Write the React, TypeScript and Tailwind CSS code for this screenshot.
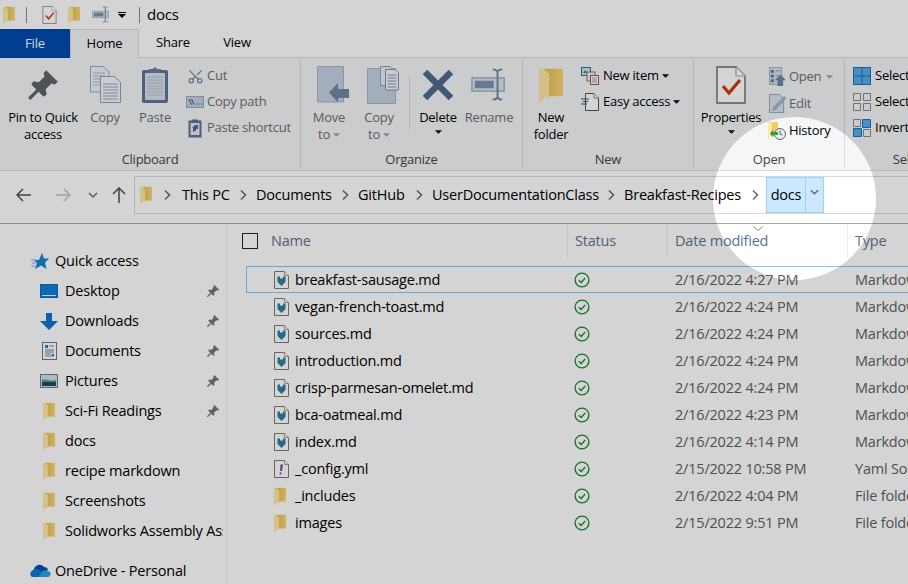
import { Scissors } from "lucide-react";
import type { ReactNode } from "react";

const uiFont = "font-['Open_Sans','Noto_Sans',sans-serif]";

function FolderDefs() {
  return (
    <svg className="absolute w-0 h-0">
      <defs>
        <linearGradient id="folderBody" x1="0" x2="1" y1="0" y2="0">
          <stop offset="0" stopColor="#e6bb52" />
          <stop offset="1" stopColor="#fad877" />
        </linearGradient>
      </defs>
    </svg>
  );
}

function FolderIcon({ className = "w-[12px] h-[18px]" }: { className?: string }) {
  return (
    <svg viewBox="0 0 14 21" className={className}>
      <path d="M3 1H14V17H3Z" fill="url(#folderBody)" />
      <path d="M0 1H2.5L6 4V18H3L1 21L0 20Z" fill="#ffe8a6" />
    </svg>
  );
}

function PinIcon({ className = "w-[15px] h-[15px]", color = "#70777f" }: { className?: string; color?: string }) {
  return (
    <svg viewBox="0 0 32 32" className={className}>
      <path d="M19 2L30 13L27 15.5L24 14.5L18.5 20L19.5 25L16.5 27L5 15.5L7 12.5L12 13.5L17.5 8L16.5 5Z" fill={color} />
      <path d="M11 21L3 29" stroke={color} strokeWidth="3" />
    </svg>
  );
}

function Caret({ color = "#000" }: { color?: string }) {
  return (
    <svg viewBox="0 0 8 4" className="w-[7px] h-[4px]">
      <path d="M0 0H8L4 4Z" fill={color} />
    </svg>
  );
}

function Chevron({ className = "w-[8px] h-[12px]", color = "#6d6d6d" }: { className?: string; color?: string }) {
  return (
    <svg viewBox="0 0 8 12" className={className}>
      <path d="M2 1.5L6.5 6L2 10.5" fill="none" stroke={color} strokeWidth="1.6" />
    </svg>
  );
}

function MdFileIcon() {
  return (
    <svg viewBox="0 0 15 18" className="w-[15px] h-[18px]">
      <path d="M.5.5H10.5L14.5 4.5V17.5H.5Z" fill="#fff" stroke="#7b7b7b" />
      <path d="M10.5.5V4.5H14.5" fill="#fff" stroke="#a0a0a0" />
      <path d="M3.5 5.5H6V7.5H9V5.5H11.5V11L7.5 15L3.5 11Z" fill="#2f7f9f" />
    </svg>
  );
}

function YamlIcon() {
  return (
    <svg viewBox="0 0 15 18" className="w-[15px] h-[18px]">
      <path d="M.5.5H10.5L14.5 4.5V17.5H.5Z" fill="#fff" stroke="#7b7b7b" />
      <path d="M10.5.5V4.5H14.5" fill="#fff" stroke="#a0a0a0" />
      <path d="M6.5 4.5H9L8 11H6.2ZM5.8 12.5H7.6L7.3 14.5H5.5Z" fill="#7a3f9d" />
    </svg>
  );
}

function SyncedIcon() {
  return (
    <svg viewBox="0 0 16 16" className="w-[16px] h-[16px]">
      <circle cx="8" cy="8" r="6.9" fill="none" stroke="#128a2c" strokeWidth="1.3" />
      <path d="M4.8 8.2L7.2 10.5L11.3 5.9" fill="none" stroke="#128a2c" strokeWidth="1.3" />
    </svg>
  );
}

function CheckDoc({ className }: { className: string }) {
  return (
    <svg viewBox="0 0 30 38" className={className}>
      <path d="M1 1H20L29 10V37H1Z" fill="#fff" stroke="#6b6b6b" strokeWidth="1.4" />
      <path d="M20 1V10H29" fill="#fff" stroke="#a8a8a8" strokeWidth="1.2" />
      <path d="M7 20L13 27L24 14" fill="none" stroke="#d13a12" strokeWidth="3.2" />
    </svg>
  );
}

function RenameIcon({ className }: { className: string }) {
  return (
    <svg viewBox="0 0 38 34" className={className}>
      <rect x="1" y="10" width="34" height="14" fill="#dce4ef" stroke="#8ea1bd" strokeWidth="1.2" />
      <rect x="4" y="13" width="20" height="8" fill="#7d92b3" />
      <path d="M23 1C26 1 27 2 28 3C29 2 30 1 33 1M28 3V31M23 33C26 33 27 32 28 31C29 32 30 33 33 33" fill="none" stroke="#6f86a8" strokeWidth="2" />
    </svg>
  );
}

function CopyIcon() {
  return (
    <svg viewBox="0 0 31 37" className="w-[31px] h-[37px]">
      <path d="M.5.5H13L19 6V26H.5Z" fill="#eef2f8" stroke="#99a9c2" />
      <path d="M3 7H15M3 10H15M3 13H15M3 16H15M3 19H15" stroke="#aab8cc" />
      <path d="M10.5 10.5H24L30.5 16V36.5H10.5Z" fill="#f3f6fa" stroke="#8ea0bb" />
      <path d="M13 18H28M13 21H28M13 24H28M13 27H28M13 30H28M13 33H28" stroke="#93a5bf" />
    </svg>
  );
}

function PasteIcon() {
  return (
    <svg viewBox="0 0 28 38" className="w-[28px] h-[38px]">
      <rect x="1" y="4" width="26" height="33" rx="2" fill="#5f7498" />
      <rect x="4" y="7" width="20" height="27" fill="#d9e0eb" />
      <path d="M6 11H22M6 14H22M6 17H22M6 20H22M6 23H22M6 26H22M6 29H22" stroke="#b4c0d2" />
      <path d="M8 3H12C12 1 16 1 16 3H20V7H8Z" fill="#6a7da0" />
    </svg>
  );
}

function MoveToIcon() {
  return (
    <svg viewBox="0 0 32 37" className="w-[32px] h-[37px] ml-[8px]">
      <path d="M.5.5H26.5V36H.5Z" fill="#c6d1e1" stroke="#a5b5cc" />
      <path d="M12 26.5L21 17V23H32V32H21V36.5Z" fill="#6f86a8" />
    </svg>
  );
}

function CopyToIcon() {
  return (
    <svg viewBox="0 0 32 38" className="w-[32px] h-[38px] ml-[8px]">
      <path d="M.5 2.5H28.5V37.5H.5Z" fill="#c6d1e1" stroke="#a5b5cc" />
      <path d="M13.5.5H23L26.5 4V19.5H13.5Z" fill="#e9eef5" stroke="#8ea0bb" />
      <path d="M18.5 3.5H28L31.5 7V24H18.5Z" fill="#f5f7fa" stroke="#7e93b1" />
      <path d="M20.5 9H29.5M20.5 12H29.5M20.5 15H29.5M20.5 18H29.5M20.5 21H29.5" stroke="#7e93b1" />
    </svg>
  );
}

function DeleteIcon() {
  return (
    <svg viewBox="0 0 32 32" className="w-[32px] h-[32px]">
      <path d="M3 3L29 29M29 3L3 29" stroke="#4f6a92" strokeWidth="6.4" />
    </svg>
  );
}

function SmallClipIcon() {
  return (
    <svg viewBox="0 0 14 20" className="w-[14px] h-[20px]">
      <rect x=".5" y="2.5" width="13" height="17" fill="#5f7498" />
      <rect x="2.5" y="5" width="9" height="12" fill="#e3e8f0" />
      <path d="M4 1.5H10V4H4Z" fill="#5f7498" />
      <path d="M5 14V10H4L7 7H10V11H8V12.5Z" fill="#4f6a92" />
    </svg>
  );
}

function CopyPathIcon() {
  return (
    <svg viewBox="0 0 18 12" className="w-[18px] h-[12px]">
      <rect x=".5" y=".5" width="17" height="11" fill="#c6d1e1" stroke="#95a8c4" />
      <path d="M3 3L5.5 8.5M5.5 3L8 8.5" stroke="#3f5375" strokeWidth="1" />
      <path d="M10 8H11M12.5 8H13.5M15 8H16" stroke="#3f5375" />
    </svg>
  );
}

function NewItemIcon() {
  return (
    <svg viewBox="0 0 18 18" className="w-[18px] h-[18px]">
      <rect x=".5" y=".5" width="9" height="8" fill="#cfe3f5" stroke="#35679c" />
      <path d="M2 6L4 3L7 6Z" fill="#4b8c4b" />
      <rect x="6" y="5" width="8" height="9" fill="#f1f1f1" stroke="#7a7a7a" />
      <rect x="9.5" y="8.5" width="8" height="9" fill="#fff" stroke="#b04a4a" />
      <path d="M11 11H16M11 13H16M11 15H16" stroke="#8aa0bf" />
    </svg>
  );
}

function EasyAccessIcon() {
  return (
    <svg viewBox="0 0 18 18" className="w-[18px] h-[18px]">
      <path d="M4.5.5H13L17.5 5V17.5H4.5Z" fill="#fff" stroke="#555" />
      <path d="M13 .5V5H17.5" fill="#fff" stroke="#888" />
      <path d="M0 6H8M2 8.5H7M0 11H6" stroke="#30507a" strokeWidth="1.1" />
    </svg>
  );
}

function OpenIcon() {
  return (
    <svg viewBox="0 0 18 20" className="w-[17px] h-[19px]">
      <rect x=".5" y=".5" width="13" height="18" fill="#d6deea" stroke="#9fb0c8" />
      <path d="M2 3H5V6H2ZM2 8H5V11H2ZM2 13H5V16H2Z" fill="#5f7498" />
      <path d="M7 4H12M7 9H10" stroke="#8ea0bb" />
      <path d="M12 8L18 14H15V20H9V14H6Z" fill="#6f86a8" />
    </svg>
  );
}

function EditIcon() {
  return (
    <svg viewBox="0 0 18 20" className="w-[17px] h-[19px]">
      <path d="M.5.5H11L15.5 5V19.5H.5Z" fill="#dbe3ee" stroke="#91a4bf" />
      <path d="M5 14L16 2.5L18 4.5L7 16L4 17Z" fill="#a9b9cf" stroke="#7e93b1" strokeWidth=".6" />
    </svg>
  );
}

function HistoryIcon() {
  return (
    <svg viewBox="0 0 18 18" className="w-[18px] h-[18px]">
      <path d="M2 0H10V14H2Z" fill="#f0cc68" />
      <path d="M0 0H2L4 2V14H2L1 17L0 16Z" fill="#ffe8a6" />
      <circle cx="12" cy="12" r="5.5" fill="#eee" stroke="#666" />
      <path d="M12 8.5V12L14.5 13" fill="none" stroke="#555" />
      <path d="M2 10H7V7.5L10 11.5L7 15.5V13H2Z" fill="#2f9e44" transform="rotate(180 6 11.5)" />
    </svg>
  );
}

function SelectAllIcon() {
  return (
    <svg viewBox="0 0 18 18" className="w-[18px] h-[18px]">
      <rect x=".5" y=".5" width="17" height="17" fill="#5aaae6" stroke="#1474c4" />
      <path d="M9 0V18M0 9H18" stroke="#1474c4" />
    </svg>
  );
}

function SelectNoneIcon() {
  return (
    <svg viewBox="0 0 18 18" className="w-[18px] h-[18px]">
      <path d="M.5.5H7.5V7.5H.5ZM10.5.5H17.5V7.5H10.5ZM.5 10.5H7.5V17.5H.5ZM10.5 10.5H17.5V17.5H10.5Z" fill="none" stroke="#888" />
    </svg>
  );
}

function InvertIcon() {
  return (
    <svg viewBox="0 0 18 18" className="w-[18px] h-[18px]">
      <path d="M.5.5H7.5V7.5H.5ZM10.5 10.5H17.5V17.5H10.5Z" fill="none" stroke="#888" />
      <path d="M9.5.5H17.5V8.5H9.5ZM.5 9.5H8.5V17.5H.5Z" fill="#5aaae6" stroke="#1474c4" />
    </svg>
  );
}

function DesktopIcon() {
  return (
    <svg viewBox="0 0 18 14" className="w-[18px] h-[14px]">
      <rect x=".5" y=".5" width="17" height="13" fill="#0f7fdc" stroke="#1668ac" />
      <path d="M2 11.5H16" stroke="#dff" strokeWidth="1" />
    </svg>
  );
}

function DownloadsIcon() {
  return (
    <svg viewBox="0 0 18 17" className="w-[18px] h-[17px]">
      <path d="M6 0H12V8H18L9 17L0 8H6Z" fill="#0e74cf" />
    </svg>
  );
}

function DocumentsIcon() {
  return (
    <svg viewBox="0 0 15 18" className="w-[15px] h-[18px]">
      <rect x=".5" y=".5" width="14" height="17" fill="#fff" stroke="#777" />
      <path d="M3 3H6V6H3Z" fill="#2a7fc4" />
      <path d="M7 4H12M3 8H12M3 10H12M3 12H9M3 14H12" stroke="#5a8fb8" />
      <path d="M10 12H12V14H10Z" fill="#3c8a4a" />
    </svg>
  );
}

function PicturesIcon() {
  return (
    <svg viewBox="0 0 18 14" className="w-[18px] h-[14px]">
      <rect x=".5" y=".5" width="17" height="13" fill="#cfe0ef" stroke="#777" />
      <path d="M2 6C6 4 10 8 16 6V8H2Z" fill="#4f9a96" />
      <path d="M2 8H16V12H2Z" fill="#1e4f5a" />
    </svg>
  );
}

function QuickAccessIcon() {
  return (
    <svg viewBox="0 0 18 17" className="w-[18px] h-[17px]">
      <path d="M11 0L13 5.5H18L14 9.5L15.5 16L10 12.5L4 16L6 10L3 7H8Z" fill="#1482d8" />
      <path d="M0 7H5M1 10H5M0 13H4" stroke="#6fb2e6" strokeWidth="1" />
    </svg>
  );
}

function OneDriveIcon() {
  return (
    <svg viewBox="0 0 21 14" className="w-[21px] h-[14px]">
      <path d="M4 5C5 1 11-1 14 3C17 3 18 5 18 6L8 10Z" fill="#0a4fa8" />
      <path d="M3 13C0 13-1 8 3 6C6 4 8 5 9 6L14 8L10 13Z" fill="#0f78d4" />
      <path d="M8 13H18C21 13 22 8 18 7C15 6 13 7 12 8Z" fill="#2aa3e6" />
    </svg>
  );
}

function LargeButton({ width, icon, lines, muted, caret }: { width: string; icon: ReactNode; lines: string[]; muted?: boolean; caret?: string }) {
  return (
    <div className={`${width} flex flex-col items-center shrink-0`}>
      <div className="h-[49px] flex items-center justify-center">{icon}</div>
      {lines.map((line, i) => (
        <div key={line} className={`h-[17px] leading-[17px] flex items-center gap-[3px] whitespace-nowrap ${muted ? "text-[#6f6f6f]" : "text-black"}`}>
          {line}
          {caret && i === lines.length - 1 && lines.length > 1 && <Caret color={caret} />}
        </div>
      ))}
      {caret && lines.length === 1 && (
        <div className="h-[12px] flex items-center">
          <Caret color={caret} />
        </div>
      )}
    </div>
  );
}

function SmallButton({ icon, label, muted, caret, gap = "gap-[5px]", height = "h-[26px]", caretGap = "ml-[2px]" }: { icon: ReactNode; label: string; muted?: boolean; caret?: string; gap?: string; height?: string; caretGap?: string }) {
  return (
    <div className={`${height} flex items-center whitespace-nowrap ${gap} ${muted ? "text-[#6f6f6f]" : "text-black"}`}>
      <span className="w-[18px] flex justify-center shrink-0">{icon}</span>
      <span>{label}</span>
      {caret && (
        <span className={caretGap}>
          <Caret color={caret} />
        </span>
      )}
    </div>
  );
}

function RibbonGroup({ width, label, children, last }: { width: string; label: string; children: ReactNode; last?: boolean }) {
  return (
    <div className={`${width} shrink-0 flex flex-col my-[2px] ${last ? "" : "border-r border-[#dadbdc]"}`}>
      <div className="h-[90px] flex">{children}</div>
      <div className="h-[18px] leading-[18px] text-center text-[#444] whitespace-nowrap">{label}</div>
    </div>
  );
}

function Ribbon() {
  return (
    <div className="h-[113px] flex bg-[#f5f6f7] border-b border-[#dadbdc] text-[13px] tracking-[-0.25px] overflow-hidden">
      <RibbonGroup width="w-[301px]" label="Clipboard">
        <LargeButton width="w-[86px]" icon={<PinIcon className="w-[34px] h-[34px]" color="#5d646c" />} lines={["Pin to Quick", "access"]} />
        <LargeButton width="w-[38px]" icon={<CopyIcon />} lines={["Copy"]} muted />
        <LargeButton width="w-[62px]" icon={<PasteIcon />} lines={["Paste"]} muted />
        <div className="pt-[3px]">
          <SmallButton icon={<Scissors className="w-[17px] h-[17px] -rotate-90 text-[#7487a5]" strokeWidth={1.8} />} label="Cut" muted gap="gap-[3px]" />
          <SmallButton icon={<CopyPathIcon />} label="Copy path" muted gap="gap-[3px]" />
          <SmallButton icon={<SmallClipIcon />} label="Paste shortcut" muted gap="gap-[3px]" />
        </div>
      </RibbonGroup>
      <RibbonGroup width="w-[222px]" label="Organize">
        <LargeButton width="w-[56px]" icon={<MoveToIcon />} lines={["Move", "to"]} muted caret="#a0a0a0" />
        <LargeButton width="w-[44px]" icon={<CopyToIcon />} lines={["Copy", "to"]} muted caret="#a0a0a0" />
        <div className="w-px h-[55px] bg-[#dadbdc] mt-[15px] ml-[8px] shrink-0" />
        <LargeButton width="w-[56px]" icon={<DeleteIcon />} lines={["Delete"]} caret="#000" />
        <LargeButton width="w-[46px]" icon={<RenameIcon className="w-[36px] h-[33px]" />} lines={["Rename"]} muted />
      </RibbonGroup>
      <RibbonGroup width="w-[171px]" label="New">
        <LargeButton width="w-[56px]" icon={<FolderIcon className="w-[24px] h-[36px]" />} lines={["New", "folder"]} />
        <div className="pt-[3px] pl-[2px]">
          <SmallButton icon={<NewItemIcon />} label="New item" caret="#000" gap="gap-[4px]" caretGap="-ml-[1px]" />
          <SmallButton icon={<EasyAccessIcon />} label="Easy access" caret="#000" gap="gap-[4px]" caretGap="-ml-[1px]" />
        </div>
      </RibbonGroup>
      <RibbonGroup width="w-[151px]" label="Open">
        <LargeButton width="w-[74px]" icon={<CheckDoc className="w-[30px] h-[38px]" />} lines={["Properties"]} caret="#000" />
        <div className="pt-[3px]">
          <SmallButton icon={<OpenIcon />} label="Open" muted caret="#a0a0a0" gap="gap-[3px]" height="h-[27px]" />
          <SmallButton icon={<EditIcon />} label="Edit" muted gap="gap-[3px]" height="h-[27px]" />
          <SmallButton icon={<HistoryIcon />} label="History" gap="gap-[3px]" height="h-[27px]" />
        </div>
      </RibbonGroup>
      <RibbonGroup width="w-[130px]" label="Select" last>
        <div className="pt-[3px] pl-[8px]">
          <SmallButton icon={<SelectAllIcon />} label="Select all" gap="gap-[4px]" />
          <SmallButton icon={<SelectNoneIcon />} label="Select none" gap="gap-[4px]" />
          <SmallButton icon={<InvertIcon />} label="Invert selection" gap="gap-[4px]" />
        </div>
      </RibbonGroup>
    </div>
  );
}

function Crumb({ label, width, gapWidth }: { label: string; width: string; gapWidth: string }) {
  return (
    <>
      <span className={`${gapWidth} shrink-0 flex justify-center`}>
        <Chevron />
      </span>
      <span className={`${width} shrink-0 whitespace-nowrap text-black`}>{label}</span>
    </>
  );
}

function AddressBar() {
  return (
    <div className="h-[53px] pb-[5px] flex items-center border-b border-[#a8a8a8]">
      <div className="w-[134px] shrink-0 flex items-center pl-[16px]">
        <svg viewBox="0 0 16 14" className="w-[16px] h-[14px]">
          <path d="M7 1L1 7L7 13M1 7H15" fill="none" stroke="#4f4f4f" strokeWidth="1.5" />
        </svg>
        <svg viewBox="0 0 16 14" className="w-[16px] h-[14px] ml-[23px]">
          <path d="M9 1L15 7L9 13M15 7H1" fill="none" stroke="#c4c4c4" strokeWidth="1.5" />
        </svg>
        <svg viewBox="0 0 10 6" className="w-[10px] h-[6px] ml-[17px]">
          <path d="M1 1L5 5L9 1" fill="none" stroke="#6a6a6a" strokeWidth="1.4" />
        </svg>
        <svg viewBox="0 0 14 16" className="w-[14px] h-[16px] ml-[14px]">
          <path d="M1 7L7 1L13 7M7 1V16" fill="none" stroke="#4f4f4f" strokeWidth="1.5" />
        </svg>
      </div>
      <div className="flex-1 h-[38px] flex items-center border border-r-0 border-[#d9d9d9] pl-[5px] overflow-hidden">
        <FolderIcon className="w-[12px] h-[18px] shrink-0" />
        <Crumb label="This PC" width="w-[47px]" gapWidth="w-[30px]" />
        <Crumb label="Documents" width="w-[75px]" gapWidth="w-[27px]" />
        <Crumb label="GitHub" width="w-[47px]" gapWidth="w-[27px]" />
        <Crumb label="UserDocumentationClass" width="w-[165px]" gapWidth="w-[27px]" />
        <Crumb label="Breakfast-Recipes" width="w-[119px]" gapWidth="w-[27px]" />
        <span className="w-[23px] shrink-0 flex justify-center">
          <Chevron />
        </span>
        <div className="h-[36px] flex shrink-0 bg-[#cce8ff] border border-[#99d1ff]">
          <span className="w-[38px] flex items-center justify-center text-black">docs</span>
          <span className="w-[18px] border-l border-[#99d1ff] flex items-center justify-center pb-[6px]">
            <svg viewBox="0 0 10 6" className="w-[9px] h-[6px]">
              <path d="M1 1L5 5L9 1" fill="none" stroke="#666" strokeWidth="1.6" />
            </svg>
          </span>
        </div>
      </div>
    </div>
  );
}

const pinned = [
  { label: "Desktop", icon: <DesktopIcon />, pin: true },
  { label: "Downloads", icon: <DownloadsIcon />, pin: true },
  { label: "Documents", icon: <DocumentsIcon />, pin: true },
  { label: "Pictures", icon: <PicturesIcon />, pin: true },
  { label: "Sci-Fi Readings", icon: <FolderIcon />, pin: true },
  { label: "docs", icon: <FolderIcon />, pin: false },
  { label: "recipe markdown", icon: <FolderIcon />, pin: false },
  { label: "Screenshots", icon: <FolderIcon />, pin: false },
  { label: "Solidworks Assembly Assets", icon: <FolderIcon />, pin: false },
];

function Sidebar() {
  return (
    <div className="w-[227px] shrink-0 border-r border-[#ececec] pt-[22px] pr-[3px] text-black">
      <div className="h-[30px] flex items-center pl-[31px] gap-[6px]">
        <QuickAccessIcon />
        <span>Quick access</span>
      </div>
      {pinned.map((item) => (
        <div key={item.label} className="h-[30px] flex items-center pl-[40px]">
          <span className="w-[18px] flex justify-center shrink-0">{item.icon}</span>
          <span className="ml-[7px] whitespace-nowrap overflow-hidden flex-1">{item.label}</span>
          {item.pin && (
            <span className="w-[17px] shrink-0">
              <PinIcon className="w-[14px] h-[14px]" />
            </span>
          )}
        </div>
      ))}
      <div className="h-[30px] mt-[10px] flex items-center pl-[30px] gap-[4px]">
        <OneDriveIcon />
        <span>OneDrive - Personal</span>
      </div>
    </div>
  );
}

const files = [
  { name: "breakfast-sausage.md", date: "2/16/2022 4:27 PM", type: "Markdown File", icon: <MdFileIcon /> },
  { name: "vegan-french-toast.md", date: "2/16/2022 4:24 PM", type: "Markdown File", icon: <MdFileIcon /> },
  { name: "sources.md", date: "2/16/2022 4:24 PM", type: "Markdown File", icon: <MdFileIcon /> },
  { name: "introduction.md", date: "2/16/2022 4:24 PM", type: "Markdown File", icon: <MdFileIcon /> },
  { name: "crisp-parmesan-omelet.md", date: "2/16/2022 4:24 PM", type: "Markdown File", icon: <MdFileIcon /> },
  { name: "bca-oatmeal.md", date: "2/16/2022 4:23 PM", type: "Markdown File", icon: <MdFileIcon /> },
  { name: "index.md", date: "2/16/2022 4:14 PM", type: "Markdown File", icon: <MdFileIcon /> },
  { name: "_config.yml", date: "2/15/2022 10:58 PM", type: "Yaml Source File", icon: <YamlIcon /> },
  { name: "_includes", date: "2/16/2022 4:04 PM", type: "File folder", icon: <FolderIcon /> },
  { name: "images", date: "2/15/2022 9:51 PM", type: "File folder", icon: <FolderIcon /> },
];

function FileList() {
  return (
    <div className="flex-1 min-w-0 overflow-hidden">
      <div className="h-[33px] flex text-[#5c7494] relative">
        <div className="w-[341px] shrink-0 flex items-center pl-[15px] border-r border-[#ececec]">
          <span className="w-[16px] h-[16px] border border-[#222] bg-white shrink-0" />
          <span className="ml-[13px]">Name</span>
        </div>
        <div className="w-[100px] shrink-0 flex items-center pl-[7px] border-r border-[#ececec]">Status</div>
        <div className="w-[180px] shrink-0 flex items-center pl-[7px] border-r border-[#ececec] whitespace-nowrap">Date modified</div>
        <div className="flex-1 flex items-center pl-[7px]">Type</div>
        <svg viewBox="0 0 10 5" className="absolute left-[526px] top-[2px] w-[10px] h-[5px]">
          <path d="M.5.5L5 4.5L9.5.5" fill="none" stroke="#8a8a8a" />
        </svg>
      </div>
      <div className="pt-[9px] pl-[19px]">
        {files.map((file, i) => (
          <div key={file.name} className={`h-[27px] flex items-center border ${i === 0 ? "border-[#85c6fa] border-r-0" : "border-transparent"}`}>
            <span className="w-[48px] pl-[27px] shrink-0 flex items-center">{file.icon}</span>
            <span className="w-[279px] shrink-0 text-black whitespace-nowrap">{file.name}</span>
            <span className="w-[101px] shrink-0 flex items-center">
              <SyncedIcon />
            </span>
            <span className="w-[180px] shrink-0 text-[#5f5f5f] whitespace-nowrap">{file.date}</span>
            <span className="text-[#5f5f5f] whitespace-nowrap">{file.type}</span>
          </div>
        ))}
      </div>
    </div>
  );
}

export default function App() {
  return (
    <div className={`relative w-[908px] h-[584px] overflow-hidden bg-white text-[14.5px] tracking-[-0.2px] ${uiFont}`}>
      <FolderDefs />
      <div className="h-[29px] flex items-center pl-[3px]">
        <FolderIcon className="w-[12px] h-[18px]" />
        <span className="w-px h-[16px] bg-[#8a8a8a] ml-[11px]" />
        <CheckDoc className="w-[15px] h-[18px] ml-[15px]" />
        <FolderIcon className="w-[12px] h-[18px] ml-[11px]" />
        <RenameIcon className="w-[18px] h-[17px] ml-[12px]" />
        <svg viewBox="0 0 8 6" className="w-[8px] h-[6px] ml-[8px]">
          <path d="M0 0H8V1H0ZM0 2H8L4 6Z" fill="#000" />
        </svg>
        <span className="w-px h-[16px] bg-[#8a8a8a] ml-[13px]" />
        <span className="ml-[7px] text-[15px] text-black">docs</span>
      </div>
      <div className="h-[29px] flex text-[13px] tracking-[-0.2px] border-b border-[#dadbdc]">
        <div className="w-[70px] h-[29px] bg-[#004bb0] text-white flex items-center justify-center">File</div>
        <div className="w-[69px] h-[29px] bg-[#f5f6f7] border border-b-0 border-[#dadbdc] text-black flex items-center justify-center">Home</div>
        <div className="w-[68px] h-[28px] text-black flex items-center justify-center">Share</div>
        <div className="w-[60px] h-[28px] text-black flex items-center justify-center">View</div>
      </div>
      <Ribbon />
      <AddressBar />
      <div className="flex h-[360px]">
        <Sidebar />
        <FileList />
      </div>
      {/* spotlight over the History button and breadcrumb */}
      <div className="absolute left-[713px] top-[117px] w-[163px] h-[163px] rounded-full pointer-events-none shadow-[0_0_0_1200px_rgba(0,0,0,0.17)]" />
    </div>
  );
}
